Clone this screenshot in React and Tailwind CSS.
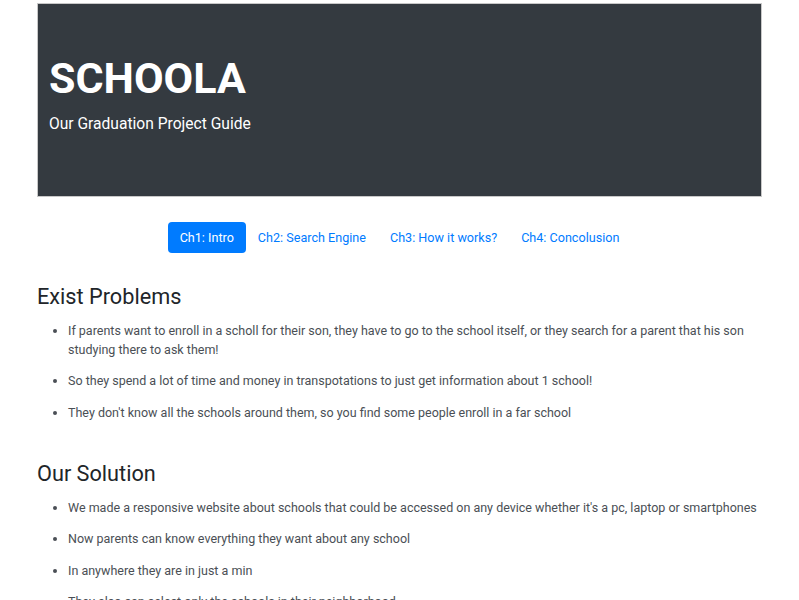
import React from 'react';

const chapters = ["Ch1: Intro", "Ch2: Search Engine", "Ch3: How it works?", "Ch4: Concolusion"];

const problems = [
    "If parents want to enroll in a scholl for their son, they have to go to the school itself, or they search for a parent that his son studying there to ask them!",
    "So they spend a lot of time and money in transpotations to just get information about 1 school!",
    "They don't know all the schools around them, so you find some people enroll in a far school",
];

const solutions = [
    "We made a responsive website about schools that could be accessed on any device whether it's a pc, laptop or smartphones",
    "Now parents can know everything they want about any school",
    "In anywhere they are in just a min",
    "They also can select only the schools in their neighborhood",
    "They can compare between schools and choose the best one for their kids",
];

const Section = ({ title, items, className }) => (
    <section className={className}>
        <h2 className="text-[21.7px] leading-[1.2] text-[#212529] mb-[11px]">{title}</h2>
        <ul className="list-disc pl-[31px] text-[12.5px] leading-[19px] text-[#4a4f55]">
            {items.map((item) => (
                <li key={item} className="mb-[12.5px]">{item}</li>
            ))}
        </ul>
    </section>
);

export default function App() {
    return (
        <div className="min-h-screen bg-white font-['Roboto',sans-serif]">
            <div className="w-[725px] mx-auto pt-[3px]">
                <header className="bg-[#343a40] border border-[#c8c8c8] pl-[11px] pt-[49px] pb-[60px] text-white">
                    <h1 className="text-[43px] font-bold leading-[1.2]">SCHOOLA</h1>
                    <p className="text-[15.6px] leading-[24px] mt-[7px]">Our Graduation Project Guide</p>
                </header>

                <nav className="flex justify-center mt-[25px]">
                    {chapters.map((ch, i) => (
                        <a
                            key={ch}
                            href="#"
                            className={
                                i === 0
                                    ? "px-3 py-[5px] text-[12.6px] leading-[21px] rounded bg-[#007bff] text-white"
                                    : "px-3 py-[5px] text-[12.6px] leading-[21px] text-[#007bff]"
                            }
                        >
                            {ch}
                        </a>
                    ))}
                </nav>

                <Section title="Exist Problems" items={problems} className="mt-[31px]" />
                <Section title="Our Solution" items={solutions} className="mt-[39px]" />
            </div>
        </div>
    );
}
